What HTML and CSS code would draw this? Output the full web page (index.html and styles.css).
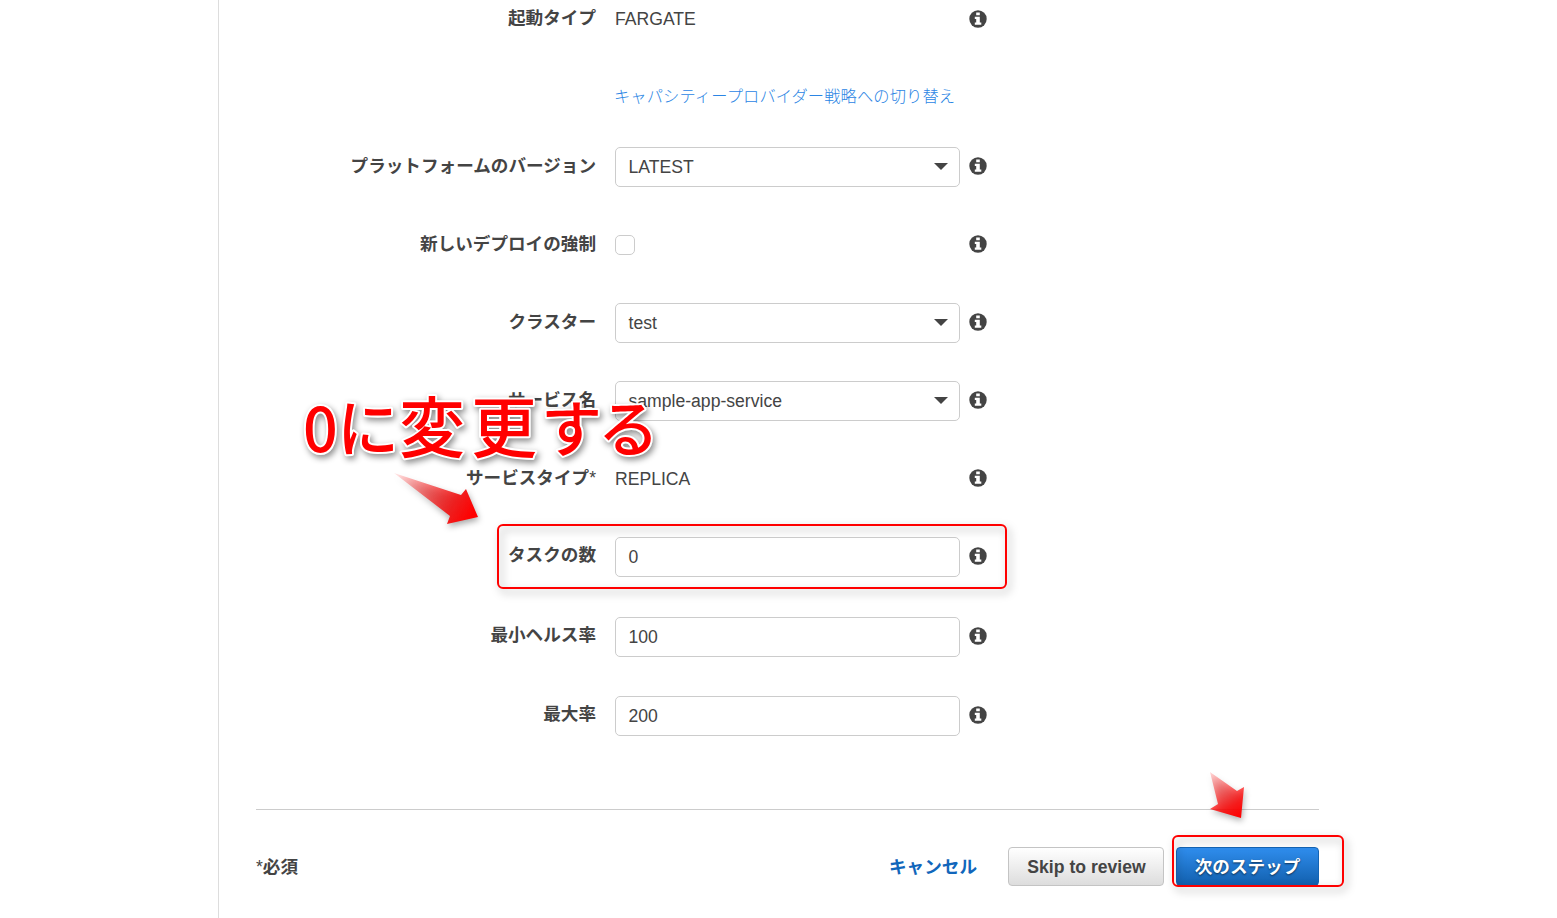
FILE: index.html
```
<!DOCTYPE html>
<html lang="ja">
<head>
  <meta charset="UTF-8">
  <meta name="viewport" content="width=device-width, initial-scale=1.0">
  <title>サービスの設定</title>
  <link rel="stylesheet" href="styles.css">
</head>
<body>
  <svg width="0" height="0" class="defs">
    <symbol id="info" viewBox="0 0 18 18">
      <circle cx="9" cy="9" r="8.7" fill="#444"/>
      <path d="M7.2 2.4h3.6v2.8H7.2zM5.8 6.8h5v5.6h1.5v2.4H5.8v-2.4h1.4V9.1H5.8z" fill="#fff"/>
    </symbol>
  </svg>

  <main class="panel">
    <div class="form">
      <div class="row">
        <label>起動タイプ</label>
        <span class="value">FARGATE</span>
        <svg class="info"><use href="#info"/></svg>
      </div>
      <div class="row row-link">
        <a class="switch">キャパシティープロバイダー戦略への切り替え</a>
      </div>
      <div class="row">
        <label>プラットフォームのバージョン</label>
        <div class="field select">LATEST</div>
        <svg class="info"><use href="#info"/></svg>
      </div>
      <div class="row">
        <label>新しいデプロイの強制</label>
        <div class="checkbox"></div>
        <svg class="info"><use href="#info"/></svg>
      </div>
      <div class="row">
        <label>クラスター</label>
        <div class="field select">test</div>
        <svg class="info"><use href="#info"/></svg>
      </div>
      <div class="row">
        <label>サービス名</label>
        <div class="field select">sample-app-service</div>
        <svg class="info"><use href="#info"/></svg>
      </div>
      <div class="row">
        <label>サービスタイプ<span class="star">*</span></label>
        <span class="value">REPLICA</span>
        <svg class="info"><use href="#info"/></svg>
      </div>
      <div class="row row-tasks">
        <label>タスクの数</label>
        <div class="field">0</div>
        <svg class="info"><use href="#info"/></svg>
      </div>
      <div class="row row-min">
        <label>最小ヘルス率</label>
        <div class="field">100</div>
        <svg class="info"><use href="#info"/></svg>
      </div>
      <div class="row row-max">
        <label>最大率</label>
        <div class="field">200</div>
        <svg class="info"><use href="#info"/></svg>
      </div>
    </div>

    <div class="footer">
      <span class="required"><span class="star">*</span>必須</span>
      <a class="cancel">キャンセル</a>
      <button class="btn btn-default">Skip to review</button>
      <button class="btn btn-primary">次のステップ</button>
    </div>
  </main>

  <!-- annotations -->
  <svg class="note" width="380" height="160" viewBox="290 380 380 160">
    <defs>
      <linearGradient id="fade1" gradientUnits="userSpaceOnUse" x1="395" y1="474" x2="470" y2="518">
        <stop offset="0" stop-color="#f00" stop-opacity=".1"/>
        <stop offset=".75" stop-color="#f01818" stop-opacity=".95"/>
        <stop offset="1" stop-color="#f00"/>
      </linearGradient>
    </defs>
    <text class="note-text" y="452"><tspan class="small" x="303">0</tspan><tspan class="kana" x="337">に</tspan><tspan x="399">変</tspan><tspan x="471">更</tspan><tspan class="small" x="541">す</tspan><tspan class="small" x="598">る</tspan></text>
    <path class="arrow" d="M394 473L461 495L466 489L478 517L447 524L450 516Z" fill="url(#fade1)"/>
  </svg>
  <svg class="note-next" width="60" height="70" viewBox="1200 760 60 70">
    <defs>
      <linearGradient id="fade2" gradientUnits="userSpaceOnUse" x1="1210" y1="772" x2="1238" y2="818">
        <stop offset="0" stop-color="#f00" stop-opacity=".15"/>
        <stop offset=".75" stop-color="#f00" stop-opacity=".85"/>
        <stop offset="1" stop-color="#f00"/>
      </linearGradient>
    </defs>
    <path class="arrow" d="M1210 772L1237 791L1244 787L1241 818L1210 809L1218 804Z" fill="url(#fade2)"/>
  </svg>
  <div class="frame frame-tasks"></div>
  <div class="frame frame-next"></div>
</body>
</html>
```
FILE: styles.css
```
* {
  box-sizing: border-box;
}

body {
  margin: 0;
  height: 918px;
  overflow: hidden;
  background: #fff;
  color: #444;
  font-family: "Liberation Sans", "Noto Sans CJK JP", sans-serif;
  font-size: 17.6px;
  position: relative;
}

.defs {
  position: absolute;
}

.panel {
  margin-left: 218px;
  width: 1101px;
  height: 918px;
  padding-left: 37px;
  border-left: 1px solid #ddd;
}

.form {
  height: 810px;
  border-bottom: 1px solid #ccc;
  overflow: hidden;
}

.row {
  display: grid;
  grid-template-columns: 341px 345px 18px;
  column-gap: 18px;
  align-items: center;
  height: 40px;
  margin-bottom: 38px;
}

.row:first-child {
  height: 38px;
  margin-bottom: 39px;
}

.row-link {
  height: 38px;
  margin-bottom: 32px;
}

.row-tasks {
  margin-bottom: 40px;
}

.row-min {
  margin-bottom: 39px;
}

label {
  font-weight: bold;
  text-align: right;
  white-space: nowrap;
  line-height: 26px;
  padding: 0 1px 2px 0;
}

.row-tasks label,
.row-min label,
.row-max label {
  padding-bottom: 4px;
}

.star {
  font-weight: normal;
}

.value {
  line-height: 24px;
  padding-bottom: 1px;
}

.switch {
  grid-column: 2;
  color: #2b85e4;
  font-size: 16.25px;
  font-weight: 300;
  letter-spacing: .12px;
  margin-left: -1px;
  white-space: nowrap;
  line-height: 24px;
}

.info {
  width: 18px;
  height: 18px;
  margin-left: -9.5px;
  margin-bottom: 2px;
}

.row:first-child .info {
  margin-bottom: 1px;
}

.row-tasks .info,
.row-min .info,
.row-max .info {
  margin-bottom: 3px;
}

.field {
  height: 40px;
  padding: 0 12.5px;
  border: 1px solid #ccc;
  border-radius: 5px;
  background: #fff;
  line-height: 38px;
}

.select {
  display: flex;
  justify-content: space-between;
  align-items: center;
  padding-right: 11px;
}

.select::after {
  content: "";
  border: 7px solid transparent;
  border-top-color: #444;
  border-bottom: 0;
  margin-bottom: 1px;
}

.checkbox {
  width: 20px;
  height: 20px;
  border: 1px solid #ccc;
  border-radius: 5px;
}

.footer {
  display: flex;
  align-items: center;
  height: 39px;
  margin-top: 37px;
  font-weight: bold;
}

.required,
.cancel {
  padding-bottom: 2px;
}

.cancel {
  margin-left: auto;
  margin-right: 31px;
  color: #1166bb;
}

.btn {
  height: 39px;
  padding: 0;
  border-radius: 4px;
  font: inherit;
  white-space: nowrap;
}

.btn-default {
  width: 156px;
  margin-right: 12px;
  padding: 1px 0 0 1px;
  border: 1px solid #c4c4c4;
  background: linear-gradient(#fff, #ddd);
  color: #444;
}

.btn-primary {
  width: 143px;
  padding-bottom: 2px;
  border: 1px solid #1464b4;
  background: linear-gradient(#2f8ded, #1260ae);
  color: #fff;
  text-shadow: 0 1px 2px rgba(0, 0, 0, .6);
}

.note {
  position: absolute;
  left: 290px;
  top: 380px;
}

.note-text {
  font-family: "Noto Sans CJK JP", sans-serif;
  font-size: 66px;
  font-weight: 500;
  fill: #f00;
  stroke: #fff;
  stroke-width: 4px;
  stroke-linejoin: round;
  paint-order: stroke;
  filter: drop-shadow(2px 3px 3px rgba(0, 0, 0, .45));
}

.note-text .small {
  font-size: 61px;
}

.note-text .kana {
  font-size: 62px;
}

.note-next {
  position: absolute;
  left: 1200px;
  top: 760px;
}

.arrow {
  filter: drop-shadow(1px 3px 3px rgba(0, 0, 0, .35));
}

.frame {
  position: absolute;
  border: 2px solid #f00;
  border-radius: 6px;
  filter: drop-shadow(3px 4px 4px rgba(0, 0, 0, .35));
}

.frame-tasks {
  left: 497px;
  top: 524px;
  width: 510px;
  height: 65px;
}

.frame-next {
  left: 1172px;
  top: 835px;
  width: 172px;
  height: 52px;
}
```
